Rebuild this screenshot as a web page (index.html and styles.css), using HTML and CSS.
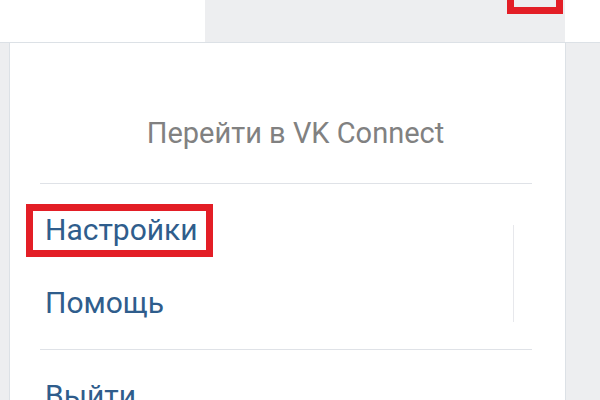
FILE: index.html
```html
<!DOCTYPE html>
<html>
<head>
  <title>VK menu</title>
  <link rel="stylesheet" href="styles.css">
</head>
<body>
  <div class="topbar">
    <div class="top-left"></div>
    <div class="top-mid"></div>
    <div class="top-right"></div>
    <div class="mark-top"></div>
  </div>
  <div class="main">
    <div class="side"></div>
    <div class="panel">
      <div class="panel-head">Перейти в VK Connect</div>
      <div class="divider"></div>
      <div class="menu">
        <ul class="menu-list">
          <li class="menu-item mark">Настройки</li>
          <li class="menu-item">Помощь</li>
        </ul>
        <div class="menu-line"></div>
      </div>
      <div class="divider"></div>
      <ul class="menu-list">
        <li class="menu-item">Выйти</li>
      </ul>
    </div>
    <div class="side side-right"></div>
  </div>
</body>
</html>
```

FILE: styles.css
```css
body {
  margin: 0;
  font-family: Roboto, "Liberation Sans", sans-serif;
  background-color: #edeef0;
  overflow: hidden;
}

.topbar {
  position: relative;
  display: flex;
  height: 42px;
  border-bottom: 1px solid #dce1e6;
}

.top-left {
  width: 205px;
  background-color: #ffffff;
}

.top-mid {
  width: 360px;
  background-color: #edeef0;
}

.top-right {
  flex: 1;
  background-color: #ffffff;
}

.mark-top {
  position: absolute;
  left: 507px;
  top: -10px;
  width: 56px;
  height: 24px;
  border: 7px solid #e31e26;
  border-top: none;
  box-sizing: border-box;
}

.main {
  display: flex;
  height: 357px;
}

.side {
  width: 9px;
  background-color: #edeef0;
}

.side-right {
  flex: 1;
}

.panel {
  width: 555px;
  background-color: #ffffff;
  border-left: 1px solid #dce1e6;
  border-right: 1px solid #dce1e6;
  overflow: hidden;
}

.panel-head {
  padding: 74px 0 34px 16px;
  text-align: center;
  font-size: 29px;
  line-height: 32px;
  color: #818181;
}

.divider {
  height: 1px;
  margin: 0 33px 0 30px;
  background-color: #dfe2e7;
}

.menu {
  display: flex;
}

.menu-list {
  flex: 1;
  list-style: none;
  margin: 0;
  padding: 30px 0 30px 35px;
}

.menu-item {
  font-size: 30px;
  line-height: 32px;
  color: #2f5d8c;
}

.menu-item + .menu-item {
  margin-top: 41px;
}

.mark {
  position: relative;
}

.mark::before {
  content: "";
  position: absolute;
  left: -19px;
  top: -10px;
  width: 187px;
  height: 53px;
  border: 7px solid #e31e26;
  box-sizing: border-box;
}

.menu-line {
  width: 1px;
  margin: 41px 51px 27px 0;
  background-color: #e7e8ec;
}
```
